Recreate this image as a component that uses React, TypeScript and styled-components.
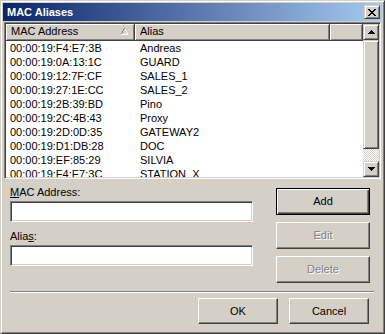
import React from "react";
import styled, { createGlobalStyle } from "styled-components";

const Global = createGlobalStyle`
  html, body { margin: 0; padding: 0; background: #d4d0c8; }
  body { font-family: "Liberation Sans", Arial, sans-serif; font-size: 11px; color: #000; }
  * { box-sizing: border-box; }
`;

const Window = styled.div`
  width: 385px;
  height: 334px;
  background: #d4d0c8;
  border: 1px solid;
  border-color: #d4d0c8 #404040 #404040 #d4d0c8;
  box-shadow: inset 1px 1px #fff, inset -1px -1px #808080;
  padding: 2px;
  display: flex;
  flex-direction: column;
`;

const TitleBar = styled.div`
  height: 18px;
  flex: none;
  background: linear-gradient(to right, #0a246a, #a6caf0);
  display: flex;
  align-items: center;
  justify-content: space-between;
  padding: 0 2px 0 4px;
`;

const Title = styled.span`
  color: #fff;
  font-weight: bold;
  font-size: 11px;
  line-height: 18px;
`;

const raised = `
  background: #d4d0c8;
  border: 1px solid;
  border-color: #fff #404040 #404040 #fff;
  box-shadow: inset -1px -1px #808080;
`;

const raisedSoft = `
  background: #d4d0c8;
  border: 1px solid;
  border-color: #d4d0c8 #404040 #404040 #d4d0c8;
  box-shadow: inset 1px 1px #fff, inset -1px -1px #808080;
`;

const CloseButton = styled.div`
  width: 16px;
  height: 14px;
  ${raisedSoft}
  display: flex;
  align-items: center;
  justify-content: center;
  padding: 0 1px 0 0;
`;

const Body = styled.div`
  flex: 1;
  display: flex;
  flex-direction: column;
  padding: 1px 1px 0 1px;
`;

const ListView = styled.div`
  height: 157px;
  flex: none;
  background: #fff;
  border: 1px solid;
  border-color: #808080 #fff #fff #808080;
  box-shadow: inset 1px 1px #404040, inset -1px -1px #d4d0c8;
  padding: 1px;
  display: flex;
`;

const ListMain = styled.div`
  flex: 1;
  min-width: 0;
  overflow: hidden;
  display: flex;
  flex-direction: column;
`;

const HeaderRow = styled.div`
  display: flex;
  height: 17px;
  flex: none;
`;

const HeaderCell = styled.div<{ $w?: number }>`
  ${(p) => (p.$w ? `width: ${p.$w}px; flex: none;` : "flex: 1;")}
  height: 17px;
  background: #d4d0c8;
  border-right: 1px solid #404040;
  border-bottom: 1px solid #404040;
  box-shadow: inset 1px 1px #fff, inset -1px -1px #808080;
  display: flex;
  align-items: center;
  justify-content: space-between;
  padding: 0 5px 1px 5px;
  line-height: 13px;
  white-space: nowrap;
`;

const Row = styled.div`
  display: flex;
  height: 14px;
  flex: none;
  line-height: 14px;
`;

const Cell = styled.div<{ $w: number; $pad: number }>`
  width: ${(p) => p.$w}px;
  flex: none;
  padding-left: ${(p) => p.$pad}px;
  white-space: nowrap;
  overflow: hidden;
`;

const ScrollBar = styled.div`
  width: 16px;
  flex: none;
  display: flex;
  flex-direction: column;
`;

const ScrollButton = styled.div`
  width: 16px;
  height: 16px;
  flex: none;
  ${raisedSoft}
  display: flex;
  align-items: center;
  justify-content: center;
`;

const Thumb = styled.div`
  height: 109px;
  flex: none;
  ${raisedSoft}
`;

const Track = styled.div`
  flex: 1;
  background: repeating-conic-gradient(#fff 0 25%, #d4d0c8 0 50%) 0 0 / 2px 2px;
`;

const FormRow = styled.div`
  display: flex;
  margin-top: 7px;
  padding-left: 6px;
`;

const Fields = styled.div`
  width: 243px;
  display: flex;
  flex-direction: column;
  gap: 8px;
`;

const Field = styled.div`
  display: flex;
  flex-direction: column;
  gap: 2px;
`;

const Label = styled.label`
  line-height: 13px;
  height: 13px;
`;

const TextBox = styled.div`
  height: 21px;
  background: #fff;
  border: 1px solid;
  border-color: #808080 #fff #fff #808080;
  box-shadow: inset 1px 1px #404040, inset -1px -1px #d4d0c8;
`;

const Buttons = styled.div`
  margin-left: 23px;
  padding-top: 2px;
  display: flex;
  flex-direction: column;
  gap: 7px;
`;

const Button = styled.div<{ $w: number; $h: number; $default?: boolean; $disabled?: boolean }>`
  width: ${(p) => p.$w}px;
  height: ${(p) => p.$h}px;
  display: flex;
  align-items: center;
  justify-content: center;
  ${raised}
  ${(p) =>
    p.$default
      ? `border: 1px solid #000; box-shadow: inset 1px 1px #fff, inset -1px -1px #404040, inset -2px -2px #808080;`
      : ""}
  color: ${(p) => (p.$disabled ? "#808080" : "#000")};
  text-shadow: ${(p) => (p.$disabled ? "1px 1px 0 #fff" : "none")};
  padding-bottom: 1px;
`;

const Separator = styled.div`
  margin: 8px 7px 0 6px;
  height: 2px;
  border-top: 1px solid #808080;
  border-bottom: 1px solid #fff;
`;

const Footer = styled.div`
  display: flex;
  justify-content: flex-end;
  gap: 11px;
  margin-top: 5px;
  padding-right: 12px;
`;

const rows: [string, string][] = [
  ["00:00:19:F4:E7:3B", "Andreas"],
  ["00:00:19:0A:13:1C", "GUARD"],
  ["00:00:19:12:7F:CF", "SALES_1"],
  ["00:00:19:27:1E:CC", "SALES_2"],
  ["00:00:19:2B:39:BD", "Pino"],
  ["00:00:19:2C:4B:43", "Proxy"],
  ["00:00:19:2D:0D:35", "GATEWAY2"],
  ["00:00:19:D1:DB:28", "DOC"],
  ["00:00:19:EF:85:29", "SILVIA"],
  ["00:00:19:F4:E7:3C", "STATION_X"],
];

const CloseGlyph = () => (
  <svg width="8" height="7" viewBox="0 0 8 7" shapeRendering="crispEdges">
    <path
      fill="#000"
      d="M0 0h2v1H0zM6 0h2v1H6zM1 1h2v1H1zM5 1h2v1H5zM2 2h4v1H2zM3 3h2v1H3zM2 4h4v1H2zM1 5h2v1H1zM5 5h2v1H5zM0 6h2v1H0zM6 6h2v1H6z"
    />
  </svg>
);

const SortArrow = () => (
  <svg width="9" height="7" viewBox="0 0 9 7" shapeRendering="crispEdges">
    <path fill="#808080" d="M4 0h1v1H4zM3 1h1v2H3zM2 3h1v2H2zM1 5h1v1H1z" />
    <path fill="#fff" d="M5 1h1v2H5zM6 3h1v2H6zM7 5h1v1H7zM1 6h7v1H1z" />
  </svg>
);

const Arrow = ({ up }: { up?: boolean }) => (
  <svg width="7" height="4" viewBox="0 0 7 4" shapeRendering="crispEdges">
    <path fill="#000" d={up ? "M3 0h1v1H3zM2 1h3v1H2zM1 2h5v1H1zM0 3h7v1H0z" : "M0 0h7v1H0zM1 1h5v1H1zM2 2h3v1H2zM3 3h1v1H3z"} />
  </svg>
);

export default function App() {
  return (
    <>
      <Global />
      <Window>
        <TitleBar>
          <Title>MAC Aliases</Title>
          <CloseButton>
            <CloseGlyph />
          </CloseButton>
        </TitleBar>
        <Body>
          <ListView>
            <ListMain>
              <HeaderRow>
                <HeaderCell $w={129}>
                  <span>MAC Address</span>
                  <SortArrow />
                </HeaderCell>
                <HeaderCell $w={195}>
                  <span>Alias</span>
                </HeaderCell>
                <HeaderCell />
              </HeaderRow>
              {rows.map(([mac, alias]) => (
                <Row key={mac}>
                  <Cell $w={129} $pad={4}>{mac}</Cell>
                  <Cell $w={195} $pad={5}>{alias}</Cell>
                </Row>
              ))}
            </ListMain>
            <ScrollBar>
              <ScrollButton>
                <Arrow up />
              </ScrollButton>
              <Thumb />
              <Track />
              <ScrollButton>
                <Arrow />
              </ScrollButton>
            </ScrollBar>
          </ListView>
          <FormRow>
            <Fields>
              <Field>
                <Label>
                  <u>M</u>AC Address:
                </Label>
                <TextBox />
              </Field>
              <Field>
                <Label>
                  Alia<u>s</u>:
                </Label>
                <TextBox />
              </Field>
            </Fields>
            <Buttons>
              <Button $w={94} $h={27} $default>Add</Button>
              <Button $w={94} $h={27} $disabled>Edit</Button>
              <Button $w={94} $h={27} $disabled>Delete</Button>
            </Buttons>
          </FormRow>
          <Separator />
          <Footer>
            <Button $w={80} $h={26}>OK</Button>
            <Button $w={80} $h={26}>Cancel</Button>
          </Footer>
        </Body>
      </Window>
    </>
  );
}
